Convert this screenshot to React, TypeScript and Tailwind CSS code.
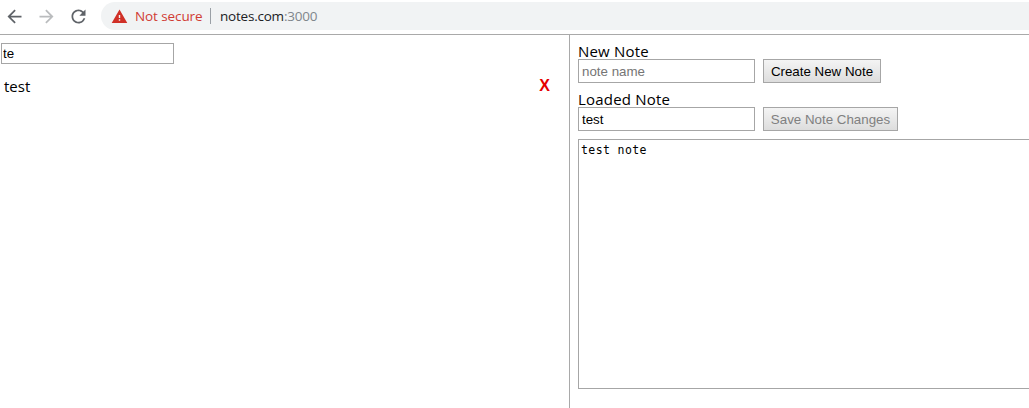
import { useState } from "react";
import { MdArrowBack, MdArrowForward, MdRefresh, MdWarning } from "react-icons/md";

const field =
  "block border border-[#a6a6a6] bg-white font-['Liberation_Sans',Arial,sans-serif] text-[13.33px] text-black outline-none placeholder:text-[#757575]";
const button =
  "h-6 shrink-0 border border-[#a6a6a6] bg-linear-to-b from-[#f4f4f4] to-[#dddddd] pt-px font-['Liberation_Sans',Arial,sans-serif] text-[13.33px] leading-[22px] whitespace-nowrap";

function BrowserBar() {
  return (
    <header className="flex h-[35px] shrink-0 items-start border-b border-[#a9a9a9] pt-[2px] font-['Open_Sans',sans-serif] text-[13.5px]">
      <div className="flex h-7 w-[101px] shrink-0 items-center gap-[11px] pl-[4px]">
        <MdArrowBack className="size-[21px] text-[#5f6368]" />
        <MdArrowForward className="size-[21px] text-[#babcbe]" />
        <MdRefresh className="size-[21px] text-[#5f6368]" />
      </div>
      <div className="flex h-7 flex-1 items-center rounded-l-full bg-[#f1f3f4] pl-[10px]">
        <MdWarning className="size-[17px] shrink-0 text-[#d03027]" />
        <span className="ml-[7px] w-[67px] tracking-[-0.1px] whitespace-nowrap text-[#d03b33]">Not secure</span>
        <span className="ml-[8px] h-4 w-px bg-[#9aa0a6]" />
        <span className="ml-[9px] tracking-[-0.22px] whitespace-nowrap text-[#202124]">
          notes.com<span className="text-[#80868b]">:3000</span>
        </span>
      </div>
    </header>
  );
}

export default function App() {
  const [query, setQuery] = useState("te");
  const [newName, setNewName] = useState("");
  const [name, setName] = useState("test");
  const [body, setBody] = useState("test note");

  return (
    <div className="flex h-[408px] w-full flex-col overflow-hidden bg-white text-black">
      <BrowserBar />
      <main className="flex min-h-0 flex-1 font-['Open_Sans',sans-serif] text-[15px]">
        <section className="w-[569px] shrink-0 pt-2 pl-px">
          <input
            className={`${field} h-[21px] w-[173px] px-px`}
            value={query}
            onChange={(e) => setQuery(e.target.value)}
          />
          <div className="mt-[11px] flex h-[22px] items-center justify-between pr-[19px] pl-[3px]">
            <span>test</span>
            <button className="font-['Liberation_Sans',Arial,sans-serif] text-base leading-5 font-bold text-[#e60000]">
              X
            </button>
          </div>
        </section>
        <section className="min-w-0 flex-1 overflow-hidden border-l border-[#a9a9a9] pt-[6px] pl-2">
          <div className="h-[18px] leading-5 tracking-[0.2px]">New Note</div>
          <div className="flex gap-2">
            <input
              className={`${field} h-6 w-[177px] px-[3px]`}
              placeholder="note name"
              value={newName}
              onChange={(e) => setNewName(e.target.value)}
            />
            <button className={`${button} w-[118px] text-black`}>Create New Note</button>
          </div>
          <div className="mt-[6px] h-[18px] leading-5 tracking-[0.2px]">Loaded Note</div>
          <div className="flex gap-2">
            <input
              className={`${field} h-6 w-[177px] px-[3px]`}
              value={name}
              onChange={(e) => setName(e.target.value)}
            />
            <button disabled className={`${button} w-[135px] text-[#808080]`}>
              Save Note Changes
            </button>
          </div>
          <textarea
            className="mt-2 block h-[250px] w-[480px] resize-none border border-[#a6a6a6] px-[2px] py-[3px] font-['DejaVu_Sans_Mono',monospace] text-[11.5px] leading-[15px] tracking-[0.4px] outline-none"
            value={body}
            onChange={(e) => setBody(e.target.value)}
          />
        </section>
      </main>
    </div>
  );
}
